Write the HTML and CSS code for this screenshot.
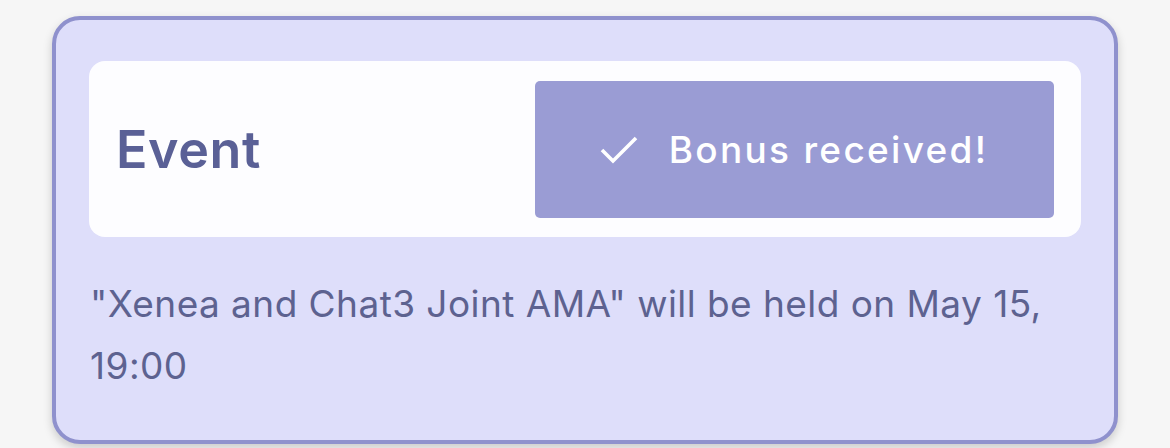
FILE: index.html
```html
<!DOCTYPE html>
<html>
<head>
<meta charset="utf-8">
<link rel="stylesheet" href="styles.css">
</head>
<body>
<div class="page">
  <div class="card">
    <div class="head">
      <div class="title">Event</div>
      <div class="btn">
        <svg class="check" width="40" height="30" viewBox="0 0 40 30"><path d="M3 15 L14 26 L37 3" fill="none" stroke="#ffffff" stroke-width="3.6" stroke-linecap="butt" stroke-linejoin="miter"/></svg>
        <span class="btn-text">Bonus received!</span>
      </div>
    </div>
    <p class="desc">"Xenea and Chat3 Joint AMA" will be held on May 15, 19:00</p>
  </div>
</div>
</body>
</html>
```
FILE: styles.css
```css
html, body {
  margin: 0;
  padding: 0;
  background: #f6f6f6;
}
.page {
  width: 1170px;
  height: 448px;
  overflow: hidden;
  padding: 16px 0 0 52px;
  box-sizing: border-box;
}
.card {
  width: 1066px;
  height: 428px;
  box-sizing: border-box;
  border: 4px solid #8f91cd;
  border-radius: 28px;
  background: #dedefa;
  box-shadow: 0 4px 10px rgba(0,0,0,0.18);
  padding: 41px 33px 0 33px;
  font-family: Inter, "Noto Sans", sans-serif;
}
.head {
  height: 176px;
  box-sizing: border-box;
  background: #fdfdff;
  border-radius: 16px;
  display: flex;
  align-items: center;
  justify-content: space-between;
  padding: 0 27px 0 27px;
}
.title {
  font-size: 52px;
  font-weight: 600;
  color: #5a6096;
  letter-spacing: 0.6px;
}
.btn {
  width: 519px;
  height: 137px;
  background: #9a9cd4;
  border-radius: 5px;
  display: flex;
  align-items: center;
  justify-content: center;
  gap: 30px;
  padding-right: 2px;
  box-sizing: border-box;
}
.check {
  display: block;
  margin-top: 2px;
}
.btn-text {
  color: #ffffff;
  font-size: 37px;
  font-weight: 500;
  letter-spacing: 2.3px;
}
.desc {
  margin: 36px 0 0 1px;
  font-size: 37px;
  line-height: 62px;
  color: #5d6290;
  letter-spacing: 0.45px;
  max-width: 990px;
}
```
